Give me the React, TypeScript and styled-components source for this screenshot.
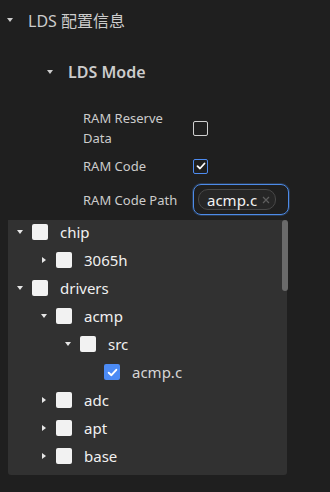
import styled, { createGlobalStyle } from "styled-components";

const GlobalStyle = createGlobalStyle`
  html, body {
    margin: 0;
    padding: 0;
    background: #1f1f1f;
  }
  body {
    font-family: "Noto Sans", "Noto Sans CJK SC", sans-serif;
    color: #cccccc;
  }
`;

interface TreeNode {
  label: string;
  level: number;
  caret?: "down" | "right";
  checked?: boolean;
}

const treeNodes: TreeNode[] = [
  { label: "chip", level: 0, caret: "down" },
  { label: "3065h", level: 1, caret: "right" },
  { label: "drivers", level: 0, caret: "down" },
  { label: "acmp", level: 1, caret: "down" },
  { label: "src", level: 2, caret: "down" },
  { label: "acmp.c", level: 3, checked: true },
  { label: "adc", level: 1, caret: "right" },
  { label: "apt", level: 1, caret: "right" },
  { label: "base", level: 1, caret: "right" },
];

const Page = styled.div`
  width: 330px;
  height: 492px;
  overflow: hidden;
`;

const SectionHeader = styled.div<{ $indent: number; $height: number }>`
  display: flex;
  align-items: center;
  height: ${(p) => p.$height}px;
  padding-left: ${(p) => p.$indent}px;
`;

const CaretBox = styled.div`
  width: 20px;
  display: flex;
  justify-content: center;
  align-items: center;
`;

const DownTriangle = styled.span<{ $color: string }>`
  width: 0;
  height: 0;
  border-left: 3.5px solid transparent;
  border-right: 3.5px solid transparent;
  border-top: 4px solid ${(p) => p.$color};
`;

const RightTriangle = styled.span<{ $color: string }>`
  width: 0;
  height: 0;
  border-top: 3.5px solid transparent;
  border-bottom: 3.5px solid transparent;
  border-left: 4px solid ${(p) => p.$color};
`;

const HeaderTitle = styled.span<{ $size: number; $weight: number }>`
  margin-left: 8px;
  font-size: ${(p) => p.$size}px;
  font-weight: ${(p) => p.$weight};
  color: #cccccc;
`;

const Form = styled.div`
  margin-top: 4px;
  padding-left: 83px;
  display: grid;
  grid-template-columns: 110px auto;
  row-gap: 8px;
  align-items: center;
`;

const Label = styled.div`
  font-size: 13px;
  line-height: 20px;
  color: #cccccc;
  width: 95px;
`;

const FormCheck = styled.div<{ $checked?: boolean }>`
  width: 15px;
  height: 15px;
  box-sizing: border-box;
  border: 1.5px solid ${(p) => (p.$checked ? "#4d8bf0" : "#d0d0d0")};
  border-radius: 2px;
  display: flex;
  align-items: center;
  justify-content: center;
`;

const SelectBox = styled.div`
  width: 96px;
  height: 31px;
  box-sizing: border-box;
  border: 1.5px solid #4d8be8;
  border-radius: 8px;
  box-shadow: 0 0 0 1px rgba(77, 139, 232, 0.25);
  display: flex;
  align-items: center;
  padding-left: 4px;
`;

const Tag = styled.div`
  height: 21px;
  box-sizing: border-box;
  border: 1px solid #484848;
  border-radius: 10px;
  background: #262626;
  display: flex;
  align-items: center;
  padding: 0 4px 0 8px;
  gap: 4px;
  font-size: 15px;
  color: #f2f2f2;
`;

const Panel = styled.div`
  position: relative;
  margin: 5px 0 0 8px;
  width: 279px;
  background: #313131;
  border-radius: 0 0 3px 3px;
  padding-bottom: 7px;
  display: flex;
  flex-direction: column;
  gap: 4px;
`;

const ScrollThumb = styled.div`
  position: absolute;
  top: 0;
  right: -1px;
  width: 6px;
  height: 71px;
  border-radius: 3px;
  background: #6a6a6a;
`;

const TreeRow = styled.div<{ $level: number }>`
  display: flex;
  align-items: center;
  height: 24px;
  padding-left: ${(p) => p.$level * 24}px;
`;

const TreeCaret = styled.div`
  width: 16px;
  margin-left: 4px;
  margin-right: 4px;
  display: flex;
  justify-content: center;
  align-items: center;
`;

const TreeCheck = styled.div<{ $checked?: boolean }>`
  width: 16px;
  height: 16px;
  border-radius: 2px;
  background: ${(p) => (p.$checked ? "#4c8bf5" : "#f2f2f2")};
  display: flex;
  align-items: center;
  justify-content: center;
`;

const TreeLabel = styled.span<{ $dim?: boolean }>`
  margin-left: 12px;
  font-size: 15px;
  color: ${(p) => (p.$dim ? "#d6d6d6" : "#f0f0f0")};
`;

const CheckMark = ({ size }: { size: number }) => (
  <svg width={size} height={size} viewBox="0 0 12 12">
    <polyline
      points="2.5,6.2 5,8.5 9.5,3.5"
      fill="none"
      stroke="#ffffff"
      strokeWidth="1.8"
      strokeLinecap="round"
      strokeLinejoin="round"
    />
  </svg>
);

const CloseIcon = () => (
  <svg width="10" height="10" viewBox="0 0 10 10">
    <path d="M2 2 L8 8 M8 2 L2 8" stroke="#5e5e5e" strokeWidth="1.2" />
  </svg>
);

export default function App() {
  return (
    <Page>
      <GlobalStyle />
      <SectionHeader $indent={0} $height={40}>
        <CaretBox>
          <DownTriangle $color="#cccccc" />
        </CaretBox>
        <HeaderTitle $size={16} $weight={400}>LDS 配置信息</HeaderTitle>
      </SectionHeader>
      <SectionHeader $indent={40} $height={64}>
        <CaretBox>
          <DownTriangle $color="#cccccc" />
        </CaretBox>
        <HeaderTitle $size={16} $weight={600}>LDS Mode</HeaderTitle>
      </SectionHeader>

      <Form>
        <Label>RAM Reserve Data</Label>
        <FormCheck />
        <Label>RAM Code</Label>
        <FormCheck $checked>
          <CheckMark size={12} />
        </FormCheck>
        <Label>RAM Code Path</Label>
        <SelectBox>
          <Tag>
            acmp.c
            <CloseIcon />
          </Tag>
        </SelectBox>
      </Form>

      <Panel>
        <ScrollThumb />
        {treeNodes.map((node) => (
          <TreeRow key={node.label + node.level} $level={node.level}>
            <TreeCaret>
              {node.caret === "down" && <DownTriangle $color="#e6e6e6" />}
              {node.caret === "right" && <RightTriangle $color="#e6e6e6" />}
            </TreeCaret>
            <TreeCheck $checked={node.checked}>
              {node.checked && <CheckMark size={13} />}
            </TreeCheck>
            <TreeLabel $dim={node.checked}>{node.label}</TreeLabel>
          </TreeRow>
        ))}
      </Panel>
    </Page>
  );
}
